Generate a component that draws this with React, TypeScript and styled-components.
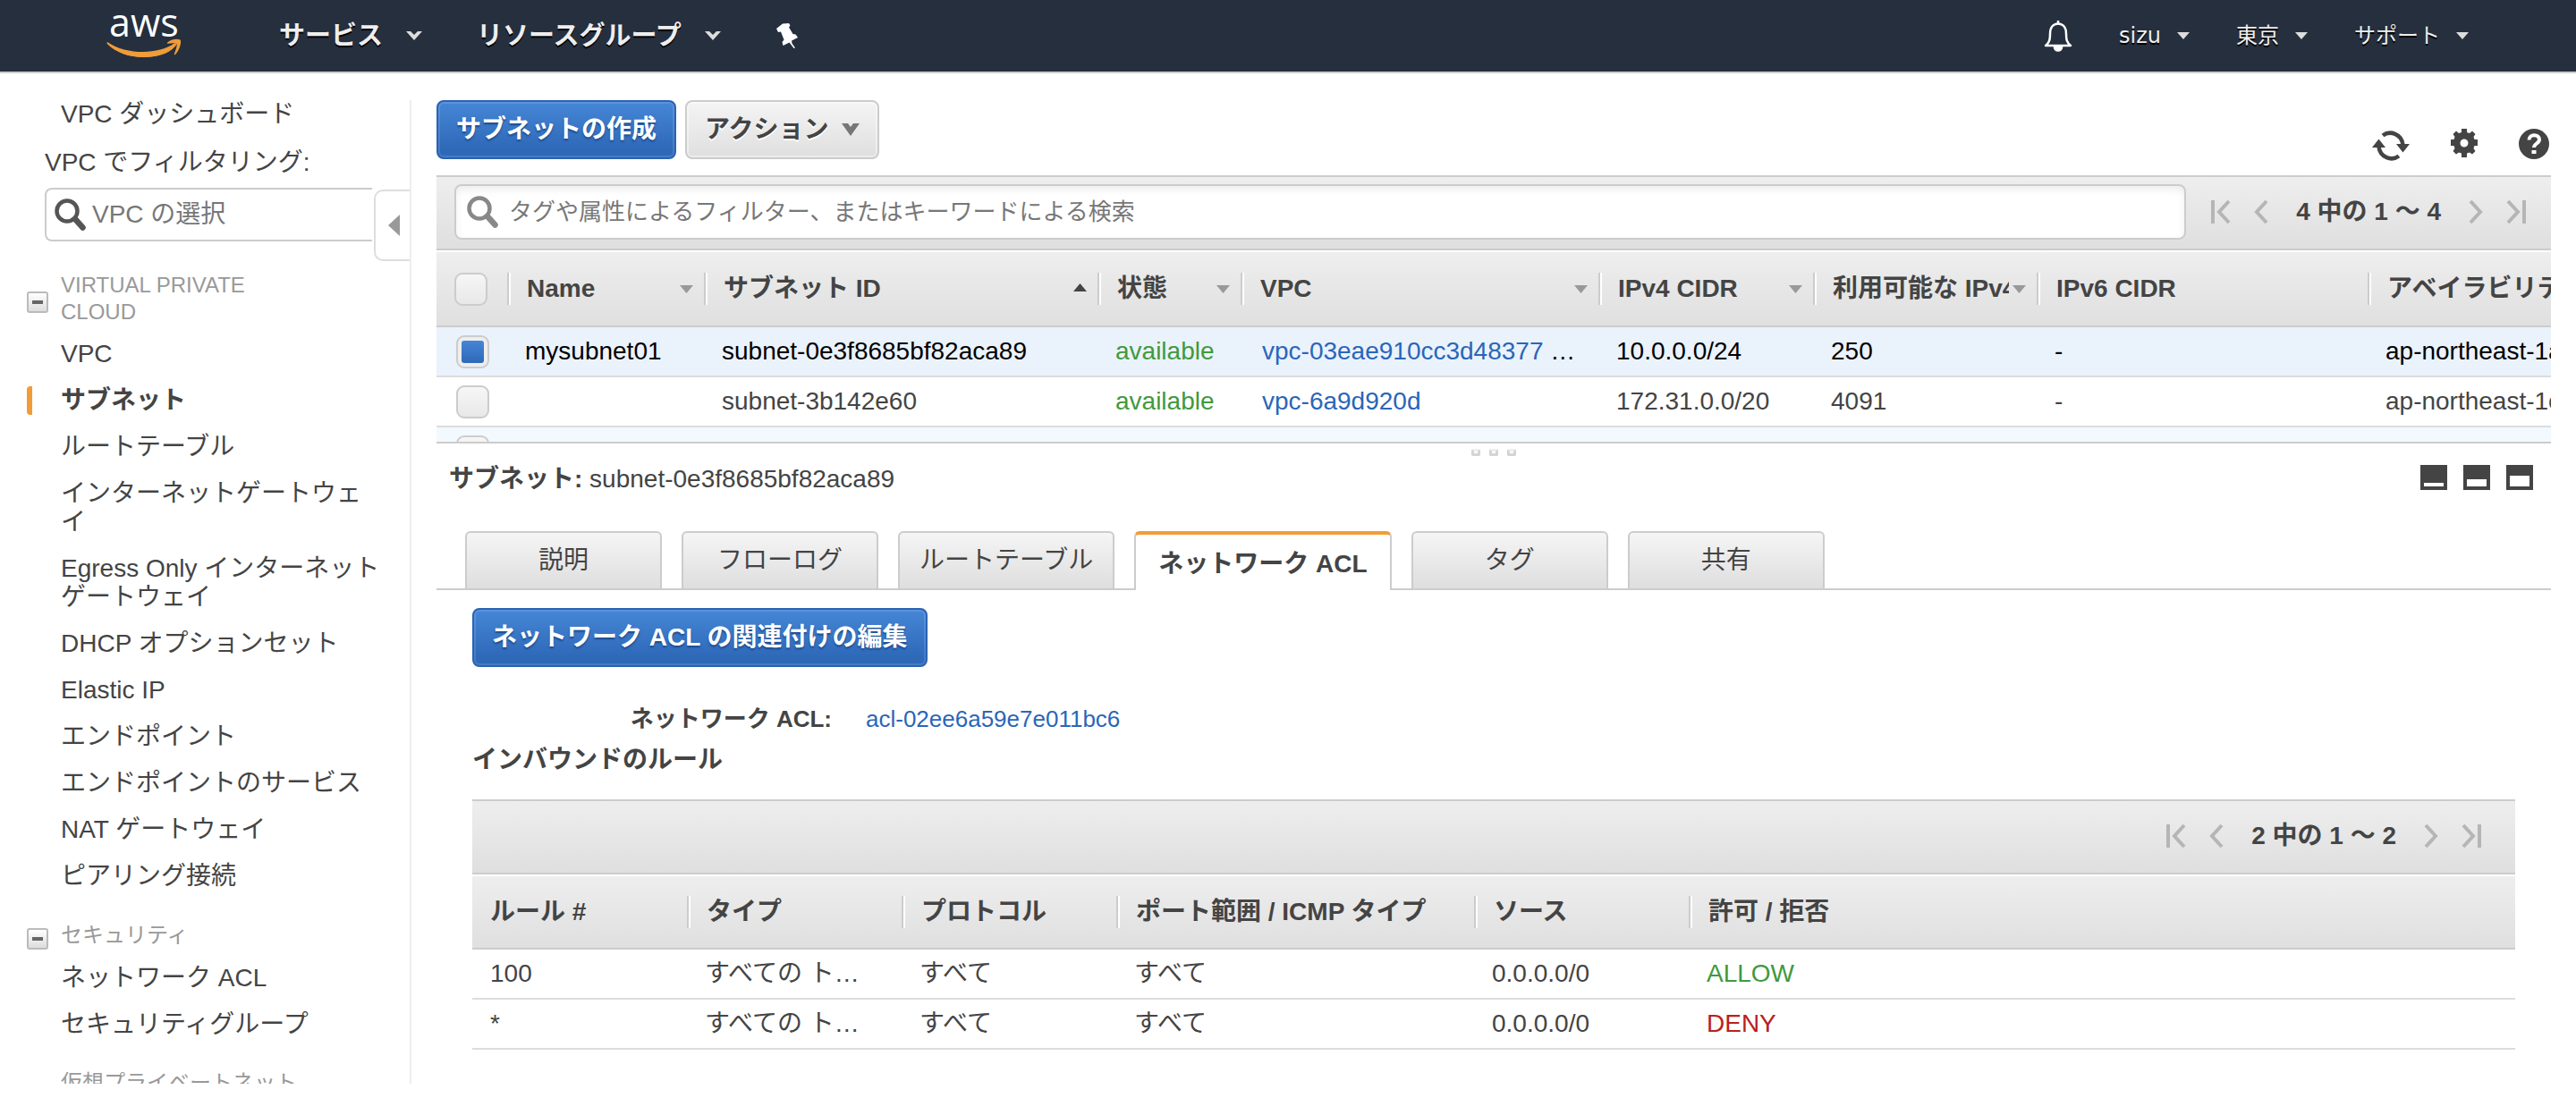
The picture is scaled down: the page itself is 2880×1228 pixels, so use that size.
import React from "react";
import styled, { createGlobalStyle, css } from "styled-components";

const GlobalStyle = createGlobalStyle`
  *, *::before, *::after { box-sizing: border-box; }
  body {
    margin: 0;
    overflow: hidden;
    background: #fff;
    color: #444;
    font-family: "Liberation Sans", "Noto Sans CJK JP", sans-serif;
    font-size: 28px;
    line-height: 32px;
  }
  button, input { font: inherit; color: inherit; }
  button { cursor: pointer; }
  ul { list-style: none; margin: 0; padding: 0; }
  svg { display: block; flex: none; overflow: visible; }
`;

const Page = styled.div`
  display: flex;
  flex-direction: column;
  height: 100vh;
  padding-bottom: 16px;
`;

/* ---------- top bar ---------- */

const TopBar = styled.header`
  display: flex;
  flex: none;
  align-items: center;
  height: 82px;
  padding: 0 120px;
  background: #252f3e;
  border-bottom: 2px solid #ccc;
`;

const LogoLink = styled.a`
  display: block;
  margin-right: 108px;
`;

const NavGroup = styled.nav<{ $gap: number }>`
  display: flex;
  align-items: center;
  gap: ${(p) => p.$gap}px;
`;

const NavButton = styled.button<{ $minor?: boolean }>`
  display: flex;
  align-items: center;
  gap: ${(p) => (p.$minor ? 18 : 25)}px;
  padding: 0;
  border: 0;
  background: none;
  color: #eee;
  font-family: ${(p) => (p.$minor ? '"DejaVu Sans", "Noto Sans CJK JP", sans-serif' : "inherit")};
  font-size: ${(p) => (p.$minor ? 24 : 29)}px;
  font-weight: ${(p) => (p.$minor ? 400 : 700)};
  text-shadow: 0 2px 0 #000;
`;

const Spacer = styled.div`
  flex: 1;
`;

/* ---------- sidebar ---------- */

const Body = styled.div`
  display: flex;
  flex: 1;
  min-height: 0;
  padding: 30px 28px 0 0;
  gap: 28px;
`;

const Sidebar = styled.aside`
  position: relative;
  flex: none;
  width: 460px;
  overflow: hidden;
  border-right: 2px solid #eee;
`;

const SideLink = styled.a<{ $active?: boolean }>`
  display: block;
  width: 398px;
  margin-left: 30px;
  padding-left: 32px;
  border-left: 6px solid ${(p) => (p.$active ? "#f29c38" : "transparent")};
  border-radius: 4px 0 0 4px;
  color: inherit;
  font-weight: ${(p) => (p.$active ? 700 : 400)};
  text-decoration: none;
`;

const FilterLabel = styled.label`
  display: block;
  margin: 22px 0 12px 50px;
`;

const VpcField = styled.div`
  display: flex;
  align-items: center;
  gap: 7px;
  width: 366px;
  height: 60px;
  margin-left: 50px;
  padding-left: 8px;
  border: 2px solid #ccc;
  border-right: 0;
  border-radius: 8px 0 0 8px;
`;

const TextInput = styled.input`
  flex: 1;
  min-width: 0;
  padding: 0;
  border: 0;
  outline: 0;
  background: none;
  &::placeholder { color: #777; opacity: 1; }
`;

const CollapseTab = styled.button`
  position: absolute;
  top: 100px;
  right: -2px;
  display: flex;
  align-items: center;
  width: 42px;
  height: 80px;
  padding: 0 0 0 14px;
  border: 2px solid #ddd;
  border-right: 0;
  border-radius: 10px 0 0 10px;
  background: #fff;
`;

const SideNav = styled.nav`
  display: flex;
  flex-direction: column;
  gap: 34px;
  margin-top: 34px;
`;

const GroupHead = styled.div`
  display: flex;
  align-items: center;
  gap: 14px;
  margin-bottom: 16px;
  padding-left: 30px;
`;

const GroupTitle = styled.h2`
  width: 280px;
  margin: 0;
  color: #999;
  font-size: 24px;
  font-weight: 400;
  line-height: 30px;
  text-transform: uppercase;
`;

const FoldButton = styled.button`
  display: flex;
  align-items: center;
  justify-content: center;
  width: 24px;
  height: 24px;
  margin-top: 8px;
  padding: 0;
  border: 2px solid #bbb;
  border-radius: 3px;
  background: linear-gradient(#fff, #ddd);
  &::after {
    content: "";
    width: 12px;
    height: 4px;
    background: #666;
  }
`;

const SideList = styled.ul`
  display: flex;
  flex-direction: column;
  gap: 20px;
`;

/* ---------- shared controls ---------- */

const Button = styled.button<{ $primary?: boolean }>`
  display: inline-flex;
  align-items: center;
  gap: 14px;
  height: 66px;
  padding: 0 20px;
  border: 2px solid #ccc;
  border-radius: 8px;
  background: linear-gradient(#f4f4f4, #dfdfdf);
  box-shadow: inset 0 0 0 2px rgba(255, 255, 255, 0.4);
  font-weight: 700;
  text-shadow: 0 2px 0 #fff;
  ${(p) =>
    p.$primary &&
    css`
      border-color: #2a63b4;
      background: linear-gradient(#4686d6, #2e69b8 85%);
      box-shadow: inset 0 0 0 2px rgba(255, 255, 255, 0.12);
      color: #fff;
      text-shadow: 0 2px 2px #1c4a8c;
    `}
`;

const IconButton = styled.button`
  display: flex;
  padding: 0;
  border: 0;
  background: none;
`;

const Checkbox = styled.input`
  display: block;
  width: 37px;
  height: 37px;
  margin: 0;
  border: 2px solid #ccc;
  border-radius: 9px;
  background: linear-gradient(#f6f6f6, #e8e8e8);
  appearance: none;
  &:checked {
    padding: 4px;
    background:
      linear-gradient(#4686d6, #2e69b8) content-box,
      #eee;
  }
`;

/* ---------- main column ---------- */

const Main = styled.main`
  display: flex;
  flex: 1;
  flex-direction: column;
  min-width: 0;
`;

const ActionRow = styled.div`
  display: flex;
  align-items: flex-end;
  gap: 10px;
  height: 84px;
  padding-bottom: 18px;
`;

const ToolIcons = styled.div`
  display: flex;
  gap: 45px;
  align-items: center;
  margin-left: auto;
  padding-right: 2px;
`;

const bar = css`
  border: 2px solid #ccc;
  border-width: 2px 0;
  background: linear-gradient(#eee, #dfdfdf);
`;

const GridBar = styled.div<{ $inner?: boolean }>`
  ${bar}
  display: flex;
  flex: none;
  align-items: center;
  justify-content: flex-end;
  gap: 28px;
  height: 84px;
  margin-bottom: 2px;
  padding: 0 ${(p) => (p.$inner ? 38 : 28)}px 2px 20px;
`;

const SearchField = styled.label`
  display: flex;
  flex: 1;
  align-items: center;
  gap: 12px;
  height: 62px;
  padding: 0 11px;
  border: 2px solid #ccc;
  border-radius: 8px;
  background: #fff;
  box-shadow: inset 0 4px 8px rgba(0, 0, 0, 0.08);
  font-size: 26px;
`;

const PagerBox = styled.div`
  display: flex;
  align-items: center;
  gap: 28px;
  font-weight: 700;
`;

const PagerText = styled.span`
  padding: 0 4px;
`;

const GridView = styled.div`
  flex: none;
  height: 214px;
  overflow: hidden;
  border-bottom: 2px solid #ccc;
`;

const Table = styled.table<{ $width: string }>`
  width: ${(p) => p.$width};
  border-spacing: 0;
  table-layout: fixed;
`;

const HeadRow = styled.tr`
  background: linear-gradient(#eee, #dfdfdf);
`;

const HeadCell = styled.th<{ $tall?: boolean }>`
  height: ${(p) => (p.$tall ? 84 : 82)}px;
  padding: 0;
  border-bottom: 2px solid #ccc;
  text-align: left;
  white-space: nowrap;
`;

const HeadInner = styled.div<{ $plain?: boolean }>`
  display: flex;
  gap: 4px;
  align-items: center;
  height: 36px;
  padding: 0 12px 0 20px;
  ${(p) =>
    !p.$plain &&
    css`
      border-left: 2px solid #ccc;
      box-shadow: inset 2px 0 0 #fff;
    `}
`;

const HeadText = styled.span`
  flex: 1;
  min-width: 0;
  overflow: hidden;
`;

const Row = styled.tr<{ $tone?: "selected" | "hover" }>`
  background: ${(p) => (p.$tone === "selected" ? "#eaf2fc" : p.$tone === "hover" ? "#f2f9ff" : "#fff")};
  color: ${(p) => (p.$tone === "selected" ? "#000" : "inherit")};
`;

const Cell = styled.td<{ $tone?: "good" | "bad" }>`
  height: 56px;
  padding: 0 0 0 20px;
  overflow: hidden;
  border-bottom: 2px solid #ddd;
  color: ${(p) => (p.$tone === "good" ? "#3f9a3c" : p.$tone === "bad" ? "#b9211b" : "inherit")};
  white-space: nowrap;
`;

const CheckCell = styled(Cell)`
  padding-left: 22px;
`;

const LinkCell = styled(Cell)`
  padding-left: 24px;
`;

const TextLink = styled.a`
  color: #2a66b8;
  text-decoration: none;
`;

/* ---------- detail pane ---------- */

const Splitter = styled.div`
  display: flex;
  flex: none;
  justify-content: center;
  gap: 10px;
  height: 24px;
  padding-top: 6px;
`;

const Grip = styled.span`
  width: 10px;
  height: 8px;
  border: 3px solid #d4d4d4;
  border-top-color: #eee;
  border-radius: 2px;
`;

const DetailHead = styled.div`
  display: flex;
  align-items: flex-start;
  justify-content: space-between;
  height: 32px;
  margin-bottom: 42px;
  padding: 0 20px 0 14px;
`;

const PaneIcons = styled.div`
  display: flex;
  gap: 18px;
`;

const Tabs = styled.div`
  display: flex;
  flex: none;
  gap: 22px;
  height: 66px;
  padding: 0 32px;
  background: linear-gradient(#ccc, #ccc) bottom / 100% 2px no-repeat;
`;

const Tab = styled.button<{ $active?: boolean }>`
  min-width: 220px;
  height: 64px;
  padding: 0 22px;
  border: 2px solid #ccc;
  border-bottom: 0;
  border-radius: 6px 6px 0 0;
  background: linear-gradient(#f5f5f5, #dedede);
  ${(p) =>
    p.$active &&
    css`
      height: 66px;
      padding: 4px 25px 0;
      border-top: 4px solid #f29c38;
      background: #fff;
      font-weight: 700;
    `}
`;

const Panel = styled.section`
  padding: 20px 40px;
`;

const FieldRow = styled.dl`
  display: grid;
  grid-template-columns: 402px 1fr;
  column-gap: 38px;
  margin: 42px 0 14px;
  font-size: 26px;
`;

const FieldName = styled.dt`
  font-weight: 700;
  text-align: right;
`;

const FieldValue = styled.dd`
  margin: 0;
`;

const SubTitle = styled.h3`
  margin: 0 0 28px;
  font-size: 28px;
`;

/* ---------- drawings ---------- */

const AwsLogo = () => (
  <svg width="84" height="56" viewBox="0 0 84 56" role="img" aria-label="aws">
    <text x="2" y="29" fill="#fff" fontFamily="'Open Sans', sans-serif" fontSize="43" fontWeight="500">
      aws
    </text>
    <g transform="translate(0 -19.5) scale(1 1.350)">
      <path d="M0.300 40.500C11 47.500 26 51 40 51c13 0 26-3.500 35-9.500 1.600-1 2.900.800 1.300 2.100C68 51 54 53 41 53 25 53 9.500 49 0 41.800c-.700-.700-.300-1.700.3-1.300z" fill="#ef9c3a" />
      <path d="M0.300 40.500C11 46 26 48.500 40 48.500c13 0 26-2.500 35-7l1.300 2.100C68 50 54 53 41 53 25 53 9.500 49 0 41.800z" fill="#ef9c3a" />
      <path d="M67 41c3.500-3 11-3.700 14.500-2.500 2 1.200-.500 8.500-5.500 12.200-.800.600-1.500.3-1.100-.600 1.500-3 3.300-6.800 2.600-7.900-1.200-1.400-6.300-.8-9.500-.500-1 .100-1.600-.2-1-.7z" fill="#ef9c3a" />
    </g>
  </svg>
);

const Chevron = () => (
  <svg width="20" height="14" viewBox="0 0 20 14">
    <path d="M1 2h5l4 4 4-4h5l-9 10z" fill="#ddd" />
  </svg>
);

const MenuChevron = () => (
  <svg width="20" height="14" viewBox="0 0 20 14">
    <path d="M0 0h7l3 4 3-4h7L10 14z" fill="#777" />
  </svg>
);

const Caret = () => (
  <svg width="14" height="10" viewBox="0 0 14 10">
    <path d="M0 1h14L7 9z" fill="#ddd" />
  </svg>
);

const Pin = () => (
  <svg width="26" height="28" viewBox="0 0 26 28" fill="#fff">
    <path d="M8 .5 15 0l1.500 2.500-1.500 2 4.500 7.500 3 .5 2.500 3.500-7 3.500.5 3 3.500 5-1.500.500-5-6.500-7 3.500-1-4 2-2.500L6 9.500l-3 .5L1 6z" />
  </svg>
);

const Bell = () => (
  <svg width="32" height="36" viewBox="0 0 32 36" fill="none" stroke="#fff" strokeWidth="2.500">
    <path d="M16 1v3M2 29c4.500-3.500 5-7 5-13 0-7 3.500-11.500 9-11.500S25 9 25 16c0 6 .5 9.500 5 13z" strokeLinejoin="round" />
    <path d="M12 31a4 3.500 0 0 0 8 0z" fill="#fff" />
  </svg>
);

const Magnifier = ({ color }: { color: string }) => (
  <svg width="36" height="36" viewBox="0 0 36 36" fill="none" stroke={color}>
    <circle cx="15" cy="14" r="11.500" strokeWidth="4.500" />
    <path d="m24 23 8.500 9.500" strokeWidth="6.500" strokeLinecap="round" />
  </svg>
);

const Refresh = () => (
  <svg width="42" height="36" viewBox="0 -4 42 36" fill="none" stroke="#444" strokeWidth="4.500">
    <path d="M12 5.500C20-.5 33 3.500 34.500 16M30 28.500C22 34.500 9 30.500 7.500 18" />
    <path d="M27 15h15l-7.500 9.500zM0 19h15L7.500 9.500z" fill="#444" stroke="none" />
  </svg>
);

const Gear = () => (
  <svg width="32" height="34" viewBox="0 0 32 34" fill="#444">
    <path
      fillRule="evenodd"
      d="M13 1h6v4l3 1 3-2.500 3.500 3.500L26.500 10l1 3H31v7h-3.500l-1 3 2 3-3.500 3.500L22 27.500l-3 1V33h-6v-4.500l-3-1-3 2L3.500 26l2-3-1-3H1v-7h3.500l1-3-2-3L7 3.500 10 6l3-1zM16 12.500a4.500 4.500 0 1 0 0 9 4.500 4.500 0 0 0 0-9z"
    />
  </svg>
);

const Help = () => (
  <svg width="34" height="36" viewBox="0 0 34 36">
    <circle cx="17" cy="19" r="17" fill="#444" />
    <path d="M11.500 14.500c0-7 11.500-7 11.500-.5 0 4.500-6 4.500-6 9" fill="none" stroke="#fff" strokeWidth="4" />
    <path d="M14.500 26h5v4h-5z" fill="#fff" />
  </svg>
);

const Arrow = ({ end = false, flip = false }: { end?: boolean; flip?: boolean }) => (
  <svg width={end ? 21 : 14} height="28" viewBox={end ? "0 0 21 28" : "0 0 14 28"} fill="none" stroke="#b5b5b5" strokeWidth="4">
    <g transform={flip ? (end ? "matrix(-1 0 0 1 21 0)" : "matrix(-1 0 0 1 14 0)") : undefined}>
      <path d="M1 2 12 14 1 26" />
      {end && <path d="M19 1v26" />}
    </g>
  </svg>
);

const SortMark = ({ dir }: { dir: "up" | "down" }) => (
  <svg width="15" height="10" viewBox="0 0 15 10">
    {dir === "up" ? <path d="M0 8h15L7.500-1z" fill="#444" /> : <path d="M0 1h15L7.500 10z" fill="#999" />}
  </svg>
);

const PaneIcon = ({ top }: { top: number }) => (
  <svg width="30" height="28" viewBox="0 0 30 28">
    <path d="M0 0h30v28H0z" fill="#444" />
    <path d={`M4 ${top}h22v${24 - top}H4z`} fill="#fff" />
  </svg>
);

/* ---------- composed parts ---------- */

const Pager = ({ text }: { text: string }) => (
  <PagerBox>
    <IconButton aria-label="最初"><Arrow end flip /></IconButton>
    <IconButton aria-label="前"><Arrow flip /></IconButton>
    <PagerText>{text}</PagerText>
    <IconButton aria-label="次"><Arrow /></IconButton>
    <IconButton aria-label="最後"><Arrow end /></IconButton>
  </PagerBox>
);

type Column = { label: string; width?: number; sort?: "up" | "down" };

const subnetColumns: Column[] = [
  { label: "Name", width: 220, sort: "down" },
  { label: "サブネット ID", width: 440, sort: "up" },
  { label: "状態", width: 160, sort: "down" },
  { label: "VPC", width: 400, sort: "down" },
  { label: "IPv4 CIDR", width: 240, sort: "down" },
  { label: "利用可能な IPv4", width: 250, sort: "down" },
  { label: "IPv6 CIDR", width: 370 },
  { label: "アベイラビリティーゾーン", width: 370 },
];

type Subnet = {
  name: string;
  id: string;
  vpc: string;
  more?: boolean;
  cidr: string;
  free: string;
  zone: string;
  tone?: "selected" | "hover";
};

const subnets: Subnet[] = [
  { name: "mysubnet01", id: "subnet-0e3f8685bf82aca89", vpc: "vpc-03eae910cc3d48377", more: true, cidr: "10.0.0.0/24", free: "250", zone: "ap-northeast-1a", tone: "selected" },
  { name: "", id: "subnet-3b142e60", vpc: "vpc-6a9d920d", cidr: "172.31.0.0/20", free: "4091", zone: "ap-northeast-1c" },
  { name: "", id: "subnet-4bd442ff", vpc: "vpc-6a9d920d", cidr: "172.31.32.0/20", free: "4091", zone: "ap-northeast-1d", tone: "hover" },
];

const ruleColumns: Column[] = [
  { label: "ルール #", width: 240 },
  { label: "タイプ", width: 240 },
  { label: "プロトコル", width: 240 },
  { label: "ポート範囲 / ICMP タイプ", width: 400 },
  { label: "ソース", width: 240 },
  { label: "許可 / 拒否" },
];

const rules = [
  { no: "100", verdict: "ALLOW", tone: "good" as const },
  { no: "*", verdict: "DENY", tone: "bad" as const },
];

const groups = [
  {
    title: "Virtual Private Cloud",
    links: ["VPC", "サブネット", "ルートテーブル", "インターネットゲートウェイ", "Egress Only インターネットゲートウェイ", "DHCP オプションセット", "Elastic IP", "エンドポイント", "エンドポイントのサービス", "NAT ゲートウェイ", "ピアリング接続"],
  },
  { title: "セキュリティ", links: ["ネットワーク ACL", "セキュリティグループ"] },
];

const tabs = ["説明", "フローログ", "ルートテーブル", "ネットワーク ACL", "タグ", "共有"];

export default function App() {
  return (
    <Page>
      <GlobalStyle />
      <TopBar>
        <LogoLink href="#"><AwsLogo /></LogoLink>
        <NavGroup $gap={60}>
          <NavButton>サービス<Chevron /></NavButton>
          <NavButton>リソースグループ<Chevron /></NavButton>
          <IconButton aria-label="ピン"><Pin /></IconButton>
        </NavGroup>
        <Spacer />
        <NavGroup $gap={52}>
          <IconButton aria-label="通知"><Bell /></IconButton>
          <NavButton $minor>sizu<Caret /></NavButton>
          <NavButton $minor>東京<Caret /></NavButton>
          <NavButton $minor>サポート<Caret /></NavButton>
        </NavGroup>
      </TopBar>

      <Body>
        <Sidebar>
          <SideLink href="#">VPC ダッシュボード</SideLink>
          <FilterLabel htmlFor="vpc">VPC でフィルタリング:</FilterLabel>
          <VpcField>
            <Magnifier color="#555" />
            <TextInput id="vpc" placeholder="VPC の選択" />
          </VpcField>
          <CollapseTab aria-label="折りたたむ">
            <svg width="13" height="24" viewBox="0 0 13 24"><path d="M13 0v24L0 12z" fill="#999" /></svg>
          </CollapseTab>
          <SideNav>
            {groups.map((g) => (
              <div key={g.title}>
                <GroupHead>
                  <FoldButton aria-label={g.title} />
                  <GroupTitle>{g.title}</GroupTitle>
                </GroupHead>
                <SideList>
                  {g.links.map((l) => (
                    <li key={l}><SideLink href="#" $active={l === "サブネット"}>{l}</SideLink></li>
                  ))}
                </SideList>
              </div>
            ))}
            <GroupHead>
              <FoldButton aria-label="仮想プライベートネットワーク" />
              <GroupTitle>仮想プライベートネットワーク</GroupTitle>
            </GroupHead>
          </SideNav>
        </Sidebar>

        <Main>
          <ActionRow>
            <Button $primary>サブネットの作成</Button>
            <Button>アクション<MenuChevron /></Button>
            <ToolIcons>
              <IconButton aria-label="更新"><Refresh /></IconButton>
              <IconButton aria-label="設定"><Gear /></IconButton>
              <IconButton aria-label="ヘルプ"><Help /></IconButton>
            </ToolIcons>
          </ActionRow>

          <GridBar>
            <SearchField>
              <Magnifier color="#888" />
              <TextInput placeholder="タグや属性によるフィルター、またはキーワードによる検索" />
            </SearchField>
            <Pager text="4 中の 1 〜 4" />
          </GridBar>

          <GridView>
            <Table $width="2529px">
              <colgroup>
                <col width={79} />
                {subnetColumns.map((c) => <col key={c.label} width={c.width} />)}
              </colgroup>
              <thead>
                <HeadRow>
                  <HeadCell $tall>
                    <HeadInner $plain><Checkbox type="checkbox" aria-label="すべて選択" /></HeadInner>
                  </HeadCell>
                  {subnetColumns.map((c) => (
                    <HeadCell $tall key={c.label}>
                      <HeadInner><HeadText>{c.label}</HeadText>{c.sort && <SortMark dir={c.sort} />}</HeadInner>
                    </HeadCell>
                  ))}
                </HeadRow>
              </thead>
              <tbody>
                {subnets.map((s) => (
                  <Row key={s.id} $tone={s.tone}>
                    <CheckCell><Checkbox type="checkbox" aria-label={s.id} defaultChecked={s.tone === "selected"} /></CheckCell>
                    <Cell>{s.name}</Cell>
                    <Cell>{s.id}</Cell>
                    <Cell $tone="good">available</Cell>
                    <LinkCell><TextLink href="#">{s.vpc}</TextLink>{s.more && " …"}</LinkCell>
                    <Cell>{s.cidr}</Cell>
                    <Cell>{s.free}</Cell>
                    <Cell>-</Cell>
                    <Cell>{s.zone}</Cell>
                  </Row>
                ))}
              </tbody>
            </Table>
          </GridView>

          <Splitter><Grip /><Grip /><Grip /></Splitter>
          <DetailHead>
            <span><b>サブネット:</b> subnet-0e3f8685bf82aca89</span>
            <PaneIcons>
              <IconButton aria-label="最小化"><PaneIcon top={20} /></IconButton>
              <IconButton aria-label="分割"><PaneIcon top={16} /></IconButton>
              <IconButton aria-label="最大化"><PaneIcon top={12} /></IconButton>
            </PaneIcons>
          </DetailHead>

          <Tabs role="tablist">
            {tabs.map((t) => (
              <Tab key={t} role="tab" $active={t === "ネットワーク ACL"}>{t}</Tab>
            ))}
          </Tabs>

          <Panel>
            <Button $primary>ネットワーク ACL の関連付けの編集</Button>
            <FieldRow>
              <FieldName>ネットワーク ACL:</FieldName>
              <FieldValue><TextLink href="#">acl-02ee6a59e7e011bc6</TextLink></FieldValue>
            </FieldRow>
            <SubTitle>インバウンドのルール</SubTitle>
            <GridBar $inner><Pager text="2 中の 1 〜 2" /></GridBar>
            <Table $width="100%">
              <colgroup>
                {ruleColumns.map((c) => <col key={c.label} width={c.width} />)}
              </colgroup>
              <thead>
                <HeadRow>
                  {ruleColumns.map((c, i) => (
                    <HeadCell key={c.label}>
                      <HeadInner $plain={i === 0}><HeadText>{c.label}</HeadText></HeadInner>
                    </HeadCell>
                  ))}
                </HeadRow>
              </thead>
              <tbody>
                {rules.map((r) => (
                  <Row key={r.no}>
                    <Cell>{r.no}</Cell>
                    <Cell>すべての ト…</Cell>
                    <Cell>すべて</Cell>
                    <Cell>すべて</Cell>
                    <Cell>0.0.0.0/0</Cell>
                    <Cell $tone={r.tone}>{r.verdict}</Cell>
                  </Row>
                ))}
              </tbody>
            </Table>
          </Panel>
        </Main>
      </Body>
    </Page>
  );
}
